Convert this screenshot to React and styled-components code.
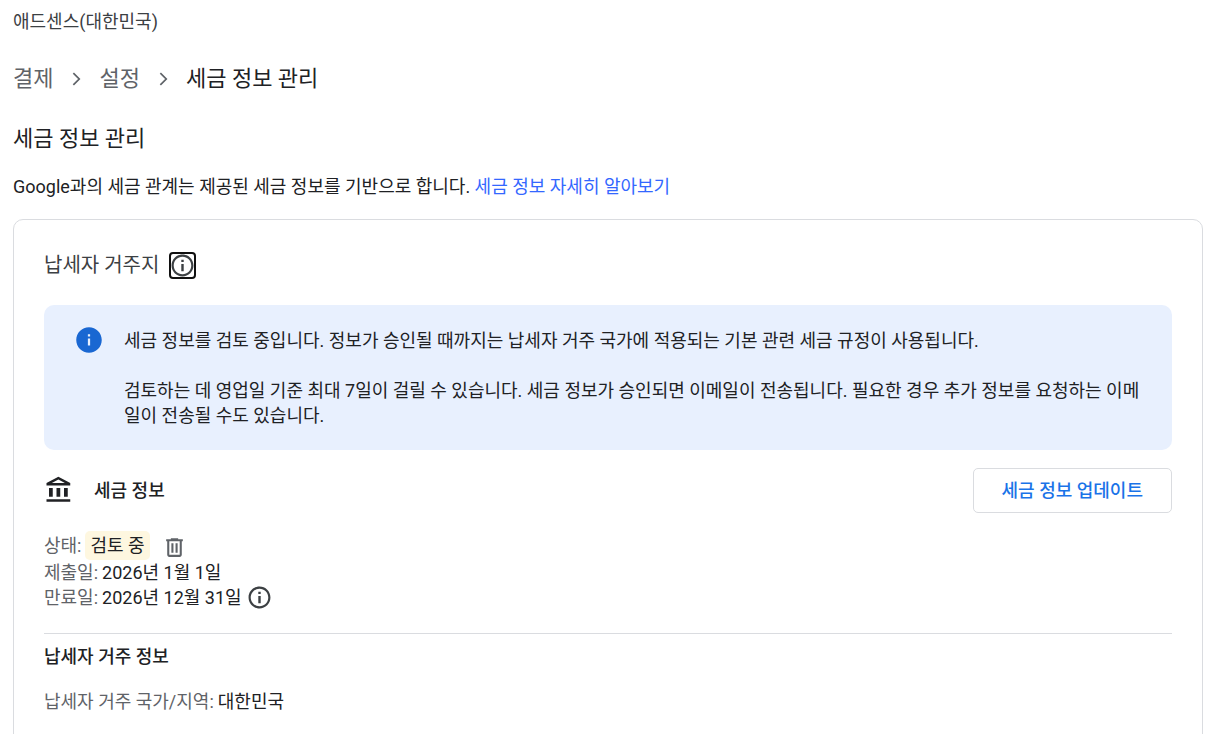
import React from 'react';
import styled, { createGlobalStyle } from 'styled-components';

function App() {
    return (
        <>
            <GlobalStyle />
            <Page>
                <Account>애드센스(대한민국)</Account>

                <Breadcrumbs aria-label="breadcrumb">
                    <a href="#">결제</a>
                    <ChevronIcon />
                    <a href="#">설정</a>
                    <ChevronIcon />
                    <span>세금 정보 관리</span>
                </Breadcrumbs>

                <Title>세금 정보 관리</Title>
                <Intro>
                    Google과의 세금 관계는 제공된 세금 정보를 기반으로 합니다.{' '}
                    <a href="#">세금 정보 자세히 알아보기</a>
                </Intro>

                <Card>
                    <CardHeader>
                        <h2>납세자 거주지</h2>
                        <IconButton $focused aria-label="납세자 거주지">
                            <InfoIcon />
                        </IconButton>
                    </CardHeader>

                    <Notice>
                        <NoticeIcon />
                        <div>
                            <p>세금 정보를 검토 중입니다. 정보가 승인될 때까지는 납세자 거주 국가에 적용되는 기본 관련 세금 규정이 사용됩니다.</p>
                            <p>검토하는 데 영업일 기준 최대 7일이 걸릴 수 있습니다. 세금 정보가 승인되면 이메일이 전송됩니다. 필요한 경우 추가 정보를 요청하는 이메일이 전송될 수도 있습니다.</p>
                        </div>
                    </Notice>

                    <SectionHeader>
                        <BankIcon />
                        <SectionTitle>세금 정보</SectionTitle>
                        <UpdateButton>세금 정보 업데이트</UpdateButton>
                    </SectionHeader>

                    <Details>
                        <StatusRow>
                            <Label>상태:</Label>
                            <Status>검토 중</Status>
                            <IconButton aria-label="삭제">
                                <TrashIcon />
                            </IconButton>
                        </StatusRow>
                        <Row>
                            <Label>제출일:</Label>
                            <span>2026년 1월 1일</span>
                        </Row>
                        <Row>
                            <Label>만료일:</Label>
                            <span>2026년 12월 31일</span>
                            <IconButton aria-label="만료일">
                                <InfoIcon />
                            </IconButton>
                        </Row>
                    </Details>

                    <Residence>
                        <SectionTitle>납세자 거주 정보</SectionTitle>
                        <Row>
                            <Label>납세자 거주 국가/지역:</Label>
                            <span>대한민국</span>
                        </Row>
                    </Residence>
                </Card>
            </Page>
        </>
    )
}

export default App


function ChevronIcon() {
    return (
        <Icon $size={26} viewBox="0 0 24 24">
            <path d="M9 7.100 10.100 6l6 6-6 6L9 16.900l4.900-4.900z" />
        </Icon>
    )
}

function InfoIcon() {
    return (
        <Icon $size={23} viewBox="1.5 1.5 21 21">
            <path d="M10.900 6.700h2.200v2.200h-2.200zm0 4h2.200v6.500h-2.200zm1.100-8.700C6.480 2 2 6.480 2 12s4.480 10 10 10 10-4.480 10-10S17.520 2 12 2zm0 18c-4.410 0-8-3.590-8-8s3.590-8 8-8 8 3.590 8 8-3.590 8-8 8z" />
        </Icon>
    )
}

function NoticeIcon() {
    return (
        <Icon $size={30} $color="#1967d2" viewBox="0 0 24 24">
            <path d="M12 1.800C6.370 1.800 1.800 6.370 1.800 12S6.370 22.200 12 22.200 22.200 17.630 22.200 12 17.630 1.800 12 1.800zm.9 14.500h-1.800v-5.500h1.800v5.500zm0-7.100h-1.800V7.400h1.800v1.800z" />
        </Icon>
    )
}

function BankIcon() {
    return (
        <Icon $size={30} viewBox="0 0 24 24">
            <path d="M7 9.500H4v7h3v-7zm6 0h-3v7h3v-7zm8 9H2v2h19v-2zm-2-9h-3v7h3v-7zm-7.500-6.740L16.710 5.500H6.290l5.210-2.740m0-2.260L2 5.500v2h19v-2L11.500.5z" />
        </Icon>
    )
}

function TrashIcon() {
    return (
        <Icon $size={25} $color="#5f6368" viewBox="0 0 24 24">
            <path d="M15.500 4V3h-7v1H4v2h1v13c0 1.100.9 2 2 2h10c1.100 0 2-.9 2-2V6h1V4h-4.500zM17 19H7V6h10v13zM9 8h2v9H9zm4 0h2v9h-2z" />
        </Icon>
    )
}

const GlobalStyle = createGlobalStyle`
    * {
        box-sizing: border-box;
    }

    body {
        margin: 0;
        background: #fff;
        color: #202124;
        font-family: Roboto, "Noto Sans CJK KR", sans-serif;
        font-size: 18px;
        line-height: 25px;
    }

    h1, h2, h3, p {
        margin: 0;
    }

    a {
        text-decoration: none;
    }
`

const Icon = styled.svg`
    display: block;
    flex: none;
    width: ${props => props.$size}px;
    height: ${props => props.$size}px;
    fill: ${props => props.$color || 'currentColor'};
`

const Page = styled.main`
    padding: 9px 16px 0 13px;
`

const Account = styled.div`
    color: #3c4043;
`

const Breadcrumbs = styled.nav`
    display: flex;
    align-items: center;
    gap: 10px;
    margin-top: 29px;
    color: #5f6368;
    font-size: 22px;
    line-height: 32px;

    a {
        color: #5f6368;
    }

    span {
        color: #202124;
    }
`

const Title = styled.h1`
    margin-top: 28px;
    font-size: 22px;
    font-weight: 400;
    line-height: 32px;
`

const Intro = styled.p`
    margin-top: 19px;

    a {
        color: #3367ff;
    }
`

const Card = styled.section`
    margin-top: 20px;
    padding: 30px;
    border: 1px solid #dadce0;
    border-radius: 10px;
`

const CardHeader = styled.div`
    display: flex;
    align-items: center;
    gap: 12px;
    color: #3c4043;

    h2 {
        font-size: 20px;
        font-weight: 400;
        line-height: 30px;
    }
`

const IconButton = styled.button`
    display: block;
    padding: 0;
    border: 0;
    border-radius: 2px;
    background: none;
    color: #3c4043;
    outline: ${props => props.$focused ? '2px solid #101010' : 'none'};
`

const Notice = styled.div`
    display: flex;
    align-items: flex-start;
    gap: 20px;
    margin-top: 25px;
    padding: 20px 30px;
    border-radius: 10px;
    background: #e8f0fe;

    > div {
        display: grid;
        gap: 25px;
        padding: 3px 0 2px;
    }
`

const SectionHeader = styled.div`
    display: flex;
    align-items: center;
    gap: 20px;
    margin-top: 18px;
`

const SectionTitle = styled.h3`
    font-size: 18px;
    font-weight: 500;
    line-height: 25px;
`

const UpdateButton = styled.button`
    height: 45px;
    margin-left: auto;
    padding: 0 28px;
    border: 1px solid #dadce0;
    border-radius: 5px;
    background: #fff;
    color: #1a73e8;
    font: inherit;
    font-weight: 500;
`

const Details = styled.div`
    margin-top: 17px;
`

const Row = styled.div`
    display: flex;
    align-items: center;
    gap: 4px;

    span + button {
        margin-left: 2px;
    }
`

const StatusRow = styled(Row)`
    height: 30px;

    span + button {
        align-self: flex-end;
        margin-left: 8px;
    }
`

const Label = styled.span`
    color: #5f6368;
`

const Status = styled.span`
    padding: 2px 5px;
    border-radius: 5px;
    background: #fef7e0;
`

const Residence = styled.div`
    margin-top: 23px;
    padding-top: 10px;
    border-top: 1px solid #dadce0;

    ${Row} {
        margin-top: 20px;
    }
`
